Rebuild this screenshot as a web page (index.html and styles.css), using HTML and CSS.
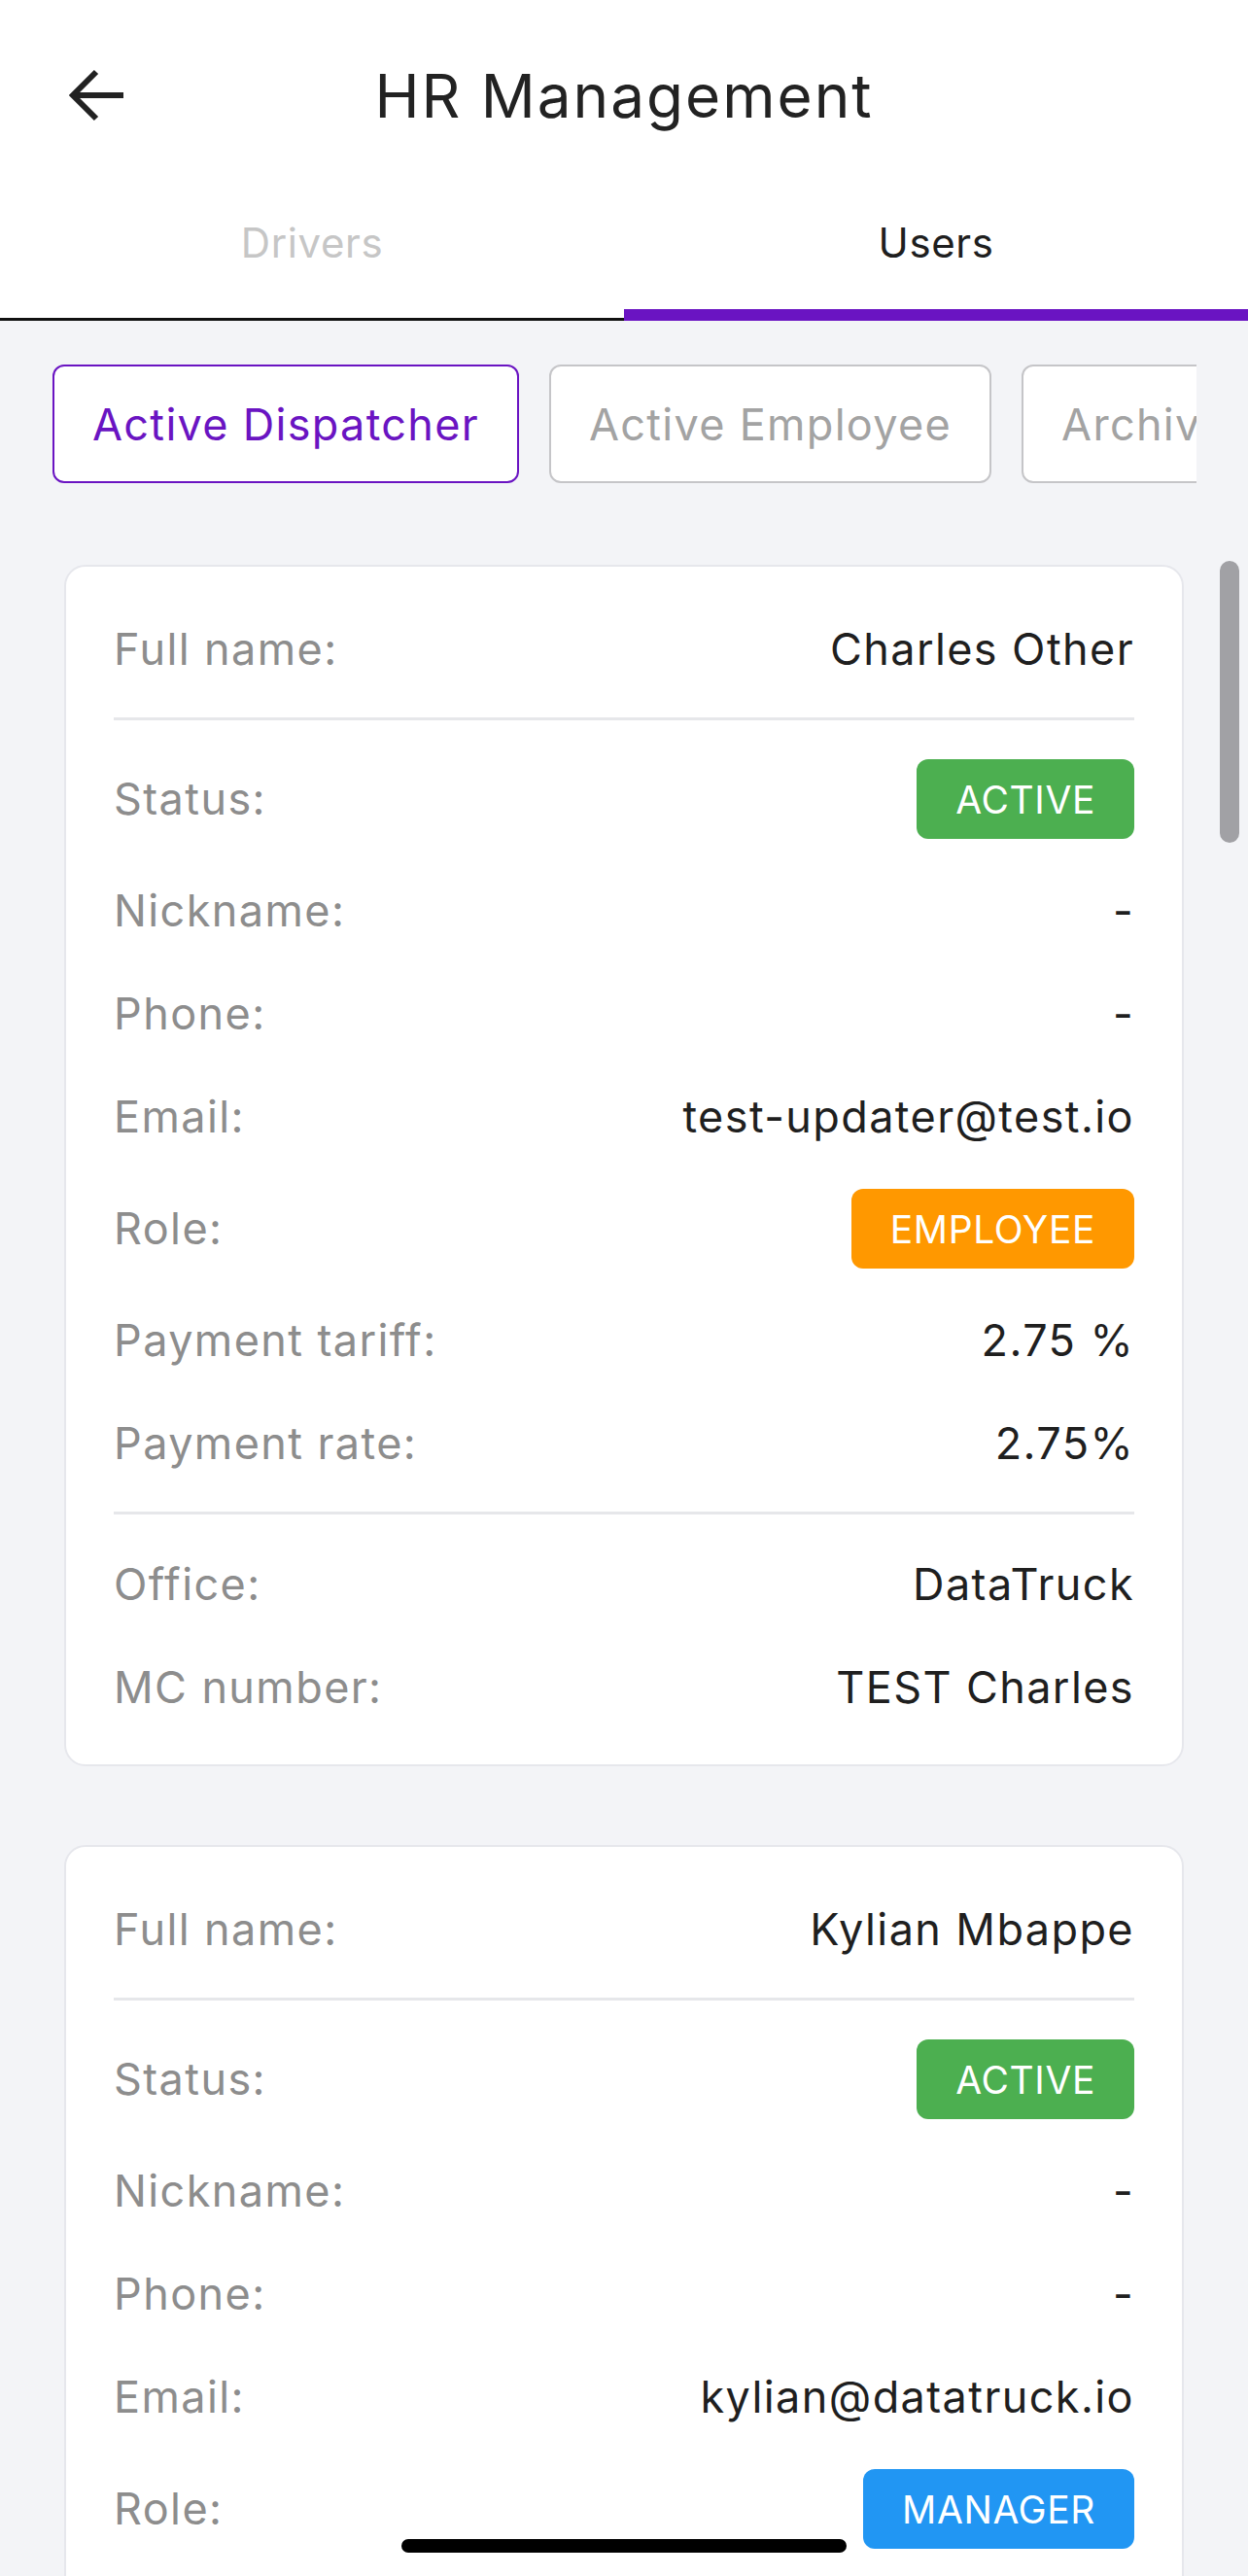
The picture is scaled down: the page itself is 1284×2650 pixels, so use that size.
FILE: index.html
```html
<!DOCTYPE html>
<html lang="en">
<head>
    <meta charset="UTF-8">
    <meta name="viewport" content="width=device-width, initial-scale=1.0">
    <title>HR Management</title>
    <link rel="stylesheet" href="styles.css">
</head>
<body>
    <div class="screen">
        <header class="topbar">
            <button class="back" aria-label="Back">
                <svg width="60" height="56" viewBox="0 0 60 56">
                    <path d="M29 4 L5 28 L29 52 M5 28 H57" fill="none" stroke="#222" stroke-width="6"/>
                </svg>
            </button>
            <h1>HR Management</h1>
            <span></span>
        </header>

        <nav class="tabs">
            <div class="tab">Drivers</div>
            <div class="tab active">Users</div>
        </nav>

        <main class="content">
            <div class="filters">
                <div class="chips">
                    <button class="chip selected">Active Dispatcher</button>
                    <button class="chip">Active Employee</button>
                    <button class="chip">Archived</button>
                </div>
            </div>

            <section class="card">
                <div class="row"><span class="label">Full name:</span><span class="value">Charles Other</span></div>
                <hr class="divider">
                <div class="row"><span class="label">Status:</span><span class="badge green">ACTIVE</span></div>
                <div class="row"><span class="label">Nickname:</span><span class="value">-</span></div>
                <div class="row"><span class="label">Phone:</span><span class="value">-</span></div>
                <div class="row"><span class="label">Email:</span><span class="value">test-updater@test.io</span></div>
                <div class="row"><span class="label">Role:</span><span class="badge orange">EMPLOYEE</span></div>
                <div class="row"><span class="label">Payment tariff:</span><span class="value">2.75 %</span></div>
                <div class="row"><span class="label">Payment rate:</span><span class="value">2.75%</span></div>
                <hr class="divider">
                <div class="row"><span class="label">Office:</span><span class="value">DataTruck</span></div>
                <div class="row"><span class="label">MC number:</span><span class="value">TEST Charles</span></div>
            </section>

            <section class="card">
                <div class="row"><span class="label">Full name:</span><span class="value">Kylian Mbappe</span></div>
                <hr class="divider">
                <div class="row"><span class="label">Status:</span><span class="badge green">ACTIVE</span></div>
                <div class="row"><span class="label">Nickname:</span><span class="value">-</span></div>
                <div class="row"><span class="label">Phone:</span><span class="value">-</span></div>
                <div class="row"><span class="label">Email:</span><span class="value">kylian@datatruck.io</span></div>
                <div class="row"><span class="label">Role:</span><span class="badge blue">MANAGER</span></div>
                <div class="row"><span class="label">Payment tariff:</span><span class="value">-</span></div>
                <div class="row"><span class="label">Payment rate:</span><span class="value">-</span></div>
                <hr class="divider">
                <div class="row"><span class="label">Office:</span><span class="value">DataTruck</span></div>
                <div class="row"><span class="label">MC number:</span><span class="value">-</span></div>
            </section>
        </main>

        <div class="scrollbar"></div>
        <div class="home-indicator"></div>
    </div>
</body>
</html>
```

FILE: styles.css
```css
body {
    margin: 0;
    font-family: Inter, "Noto Sans", sans-serif;
    color: #1f1f1f;
}
.screen {
    position: relative;
    height: 2650px;
    overflow: hidden;
    background-color: #f3f4f7;
}
.topbar {
    display: grid;
    grid-template-columns: 1fr auto 1fr;
    align-items: center;
    height: 196px;
    background-color: #fff;
}
.back {
    justify-self: start;
    display: flex;
    margin-left: 70px;
    padding: 0;
    border: none;
    background: none;
}
.topbar h1 {
    margin: 0;
    font-size: 62px;
    font-weight: 400;
    letter-spacing: 2px;
    color: #222;
}
.tabs {
    display: flex;
    background-color: #fff;
}
.tab {
    flex: 1;
    box-sizing: border-box;
    height: 134px;
    padding-top: 29px;
    text-align: center;
    font-size: 42px;
    line-height: 50px;
    letter-spacing: 0.6px;
    color: #c6c6c6;
    border-bottom: 3px solid #111;
}
.tab.active {
    color: #1f1f1f;
    border-bottom: 12px solid #6a14c2;
}
.content {
    padding-top: 45px;
}
.filters {
    margin: 0 53px 0 54px;
    overflow: hidden;
}
.chips {
    display: flex;
    gap: 31px;
}
.chip {
    flex: none;
    height: 122px;
    padding: 0 39px;
    border: 2px solid #c5c5c8;
    border-radius: 12px;
    background-color: #fff;
    font-family: inherit;
    font-size: 45px;
    letter-spacing: 1.3px;
    color: #a3a3a3;
}
.chip.selected {
    border-color: #6a14c2;
    color: #6a14c2;
}
.card {
    margin: 84px 66px 0;
    padding: 32px 49px 26px;
    background-color: #fff;
    border: 2px solid #e6e7ec;
    border-radius: 22px;
}
.card + .card {
    margin-top: 81px;
}
.row {
    display: flex;
    justify-content: space-between;
    align-items: center;
    padding: 21px 0;
    font-size: 45px;
    line-height: 64px;
    letter-spacing: 1.4px;
}
.label {
    color: #8d8d8d;
}
.value {
    color: #1f1f1f;
}
.divider {
    height: 3px;
    margin: 17px 0 19px;
    border: none;
    background-color: #e6e7ea;
}
.badge {
    display: inline-flex;
    align-items: center;
    height: 82px;
    padding: 0 40px;
    border-radius: 12px;
    font-size: 39px;
    line-height: 1;
    letter-spacing: 0.6px;
    color: #fff;
}
.badge.green {
    background-color: #4caf50;
}
.badge.orange {
    background-color: #ff9800;
}
.badge.blue {
    background-color: #2196f3;
}
.scrollbar {
    position: absolute;
    top: 577px;
    right: 9px;
    width: 20px;
    height: 290px;
    border-radius: 10px;
    background-color: #a1a1a5;
}
.home-indicator {
    position: absolute;
    bottom: 24px;
    left: 50%;
    width: 458px;
    height: 14px;
    margin-left: -229px;
    border-radius: 7px;
    background-color: #000;
}
```
